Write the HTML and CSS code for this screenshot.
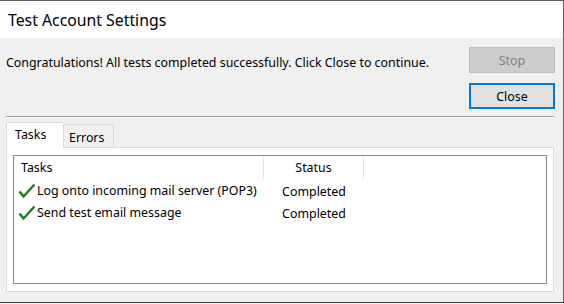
FILE: index.html
```html
<!DOCTYPE html>
<html lang="en">
<head>
    <meta charset="UTF-8">
    <title>Test Account Settings</title>
    <link rel="stylesheet" href="styles.css">
</head>
<body>
    <div class="window">
        <div class="titlebar">Test Account Settings</div>

        <div class="content">
            <div class="top-row">
                <div class="message">Congratulations! All tests completed successfully. Click Close to continue.</div>
                <div class="buttons">
                    <button class="btn btn-disabled" disabled>Stop</button>
                    <button class="btn btn-default">Close</button>
                </div>
            </div>

            <div class="separator"></div>

            <div class="tabs">
                <div class="tab tab-active">Tasks</div>
                <div class="tab">Errors</div>
            </div>

            <div class="panel">
                <div class="list">
                    <div class="list-header">
                        <div class="col-task">Tasks</div>
                        <div class="col-status">Status</div>
                        <div class="col-rest"></div>
                    </div>
                    <div class="list-row">
                        <div class="col-task">
                            <svg class="check" width="18" height="16" viewBox="0 0 18 16">
                                <polyline points="1.5,8.5 5.5,13.5 16.5,1.5" fill="none" stroke="#1c7a1c" stroke-width="2.4"/>
                            </svg>
                            Log onto incoming mail server (POP3)
                        </div>
                        <div class="col-status">Completed</div>
                    </div>
                    <div class="list-row">
                        <div class="col-task">
                            <svg class="check" width="18" height="16" viewBox="0 0 18 16">
                                <polyline points="1.5,8.5 5.5,13.5 16.5,1.5" fill="none" stroke="#1c7a1c" stroke-width="2.4"/>
                            </svg>
                            Send test email message
                        </div>
                        <div class="col-status">Completed</div>
                    </div>
                </div>
            </div>
        </div>
    </div>
    <div class="behind"></div>
</body>
</html>
```

FILE: styles.css
```css
body {
    margin: 0;
    width: 564px;
    height: 304px;
    overflow: hidden;
    background: #ffffff;
    font-family: "Noto Sans", "Open Sans", sans-serif;
    font-size: 12.4px;
    color: #000000;
}
.window {
    width: 563px;
    height: 301px;
    border-top: 1px solid #5f5f5f;
    border-right: 1px solid #5f5f5f;
    background: #f0f0f0;
    display: flex;
    flex-direction: column;
}
.titlebar {
    height: 37px;
    background: #ffffff;
    display: flex;
    align-items: center;
    padding-left: 8px;
    font-size: 15.8px;
    color: #000000;
}
.content {
    flex: 1;
    padding: 9px 0 0 6px;
}
.top-row {
    display: flex;
    justify-content: space-between;
    width: 549px;
}
.message {
    margin-top: 7px;
    line-height: 17px;
    white-space: nowrap;
}
.buttons {
    display: flex;
    flex-direction: column;
    gap: 10px;
}
.btn {
    width: 86px;
    height: 26px;
    font-family: inherit;
    font-size: 12.4px;
    padding: 0;
}
.btn-disabled {
    background: #cccccc;
    border: 1px solid #bfbfbf;
    color: #838383;
}
.btn-default {
    background: #e1e1e1;
    border: 2px solid #0078d7;
    color: #000000;
}
.separator {
    width: 548px;
    height: 1px;
    margin-top: 7px;
    background: #a0a0a0;
    border-bottom: 1px solid #ffffff;
}
.tabs {
    display: flex;
    align-items: flex-end;
    height: 25px;
    margin-top: 4px;
}
.tab {
    box-sizing: border-box;
    height: 23px;
    width: 51px;
    padding-left: 5px;
    border: 1px solid #d9d9d9;
    border-bottom: none;
    background: #f0f0f0;
    line-height: 25px;
}
.tab-active {
    position: relative;
    z-index: 1;
    height: 26px;
    width: 57px;
    margin-bottom: -1px;
    padding-left: 8px;
    background: #ffffff;
    line-height: 24px;
    border-right: none;
}
.panel {
    width: 548px;
    height: 145px;
    box-sizing: border-box;
    border: 1px solid #d9d9d9;
    background: #ffffff;
    padding: 7px 6px;
}
.list {
    height: 129px;
    box-sizing: border-box;
    border: 1px solid #828790;
    background: #ffffff;
}
.list-header {
    display: flex;
    height: 24px;
    line-height: 24px;
}
.list-header .col-task,
.list-header .col-status {
    border-right: 1px solid #e5e5e5;
}
.col-task {
    width: 250px;
    box-sizing: border-box;
    padding-left: 7px;
    white-space: nowrap;
}
.col-status {
    width: 100px;
    box-sizing: border-box;
    text-align: center;
}
.list-row {
    display: flex;
    height: 22px;
    line-height: 24px;
}
.list-row .col-task {
    padding-left: 4px;
    display: flex;
    align-items: center;
    gap: 1px;
}
.check {
    flex: none;
}
.behind {
    height: 2px;
    border-top: 1px solid #3a3a3a;
    background: #f4f4f4;
}
```
